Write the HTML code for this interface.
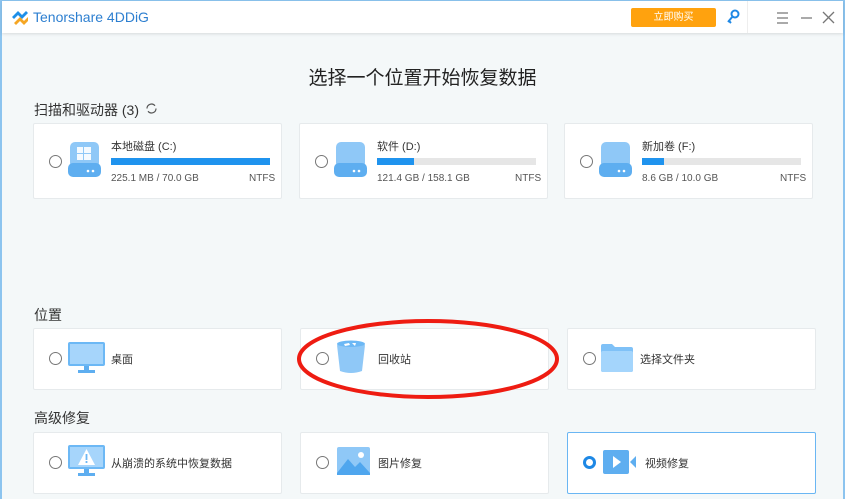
<!DOCTYPE html>
<html><head><meta charset="utf-8"><style>
*{margin:0;padding:0;box-sizing:border-box}
body{width:845px;height:499px;overflow:hidden;background:#f4f8f9;font-family:"Liberation Sans","Noto Sans CJK SC",sans-serif;position:relative;color:#333}
.win{position:absolute;left:0;top:0;width:845px;height:499px;border-left:2px solid #8cc4ef;border-top:1px solid #8cc4ef;border-right:2px solid #8cc4ef}
.bar{position:absolute;left:2px;top:1px;width:841px;height:32px;background:#fff;box-shadow:0 1px 3px rgba(0,0,0,.12)}
.a{position:absolute}
.card{position:absolute;background:#fff;border:1px solid #e6eaec;border-radius:2px}
.radio{position:absolute;width:13px;height:13px;border:1px solid #777;border-radius:50%}
.t{position:absolute;font-size:11px;color:#333;white-space:nowrap}
.s{position:absolute;font-size:10px;color:#555}
.h{position:absolute;font-size:14px;color:#333}
.prog{position:absolute;height:7px;background:#e6e6e6}
.prog i{display:block;height:7px;background:#1f93ee}
</style></head><body>
<div class="win"></div>
<div class="bar">
 <svg class="a" style="left:8px;top:8px" width="20" height="18" viewBox="0 0 20 18"><path d="M2 8 L8 2 L12 6 L16 2 L18 4 L12 10 L8 6 L4 10Z" fill="#1e8fe8"/><path d="M4 14 L10 8 L14 12 L18 8 L18 12 L14 16 L10 12 L6 16Z" fill="#f5a623"/></svg>
 <div class="a" style="left:31px;top:8px;font-size:14px;color:#2d7fd0">Tenorshare 4DDiG</div>
 <div class="a" style="left:629px;top:7px;width:85px;height:19px;background:#ffa20e;border-radius:2px;color:#fff;font-size:10px;text-align:center;line-height:19px">立即购买</div>
 <svg class="a" style="left:724px;top:8px" width="14" height="16" viewBox="0 0 14 16"><circle cx="9" cy="5" r="3.5" fill="none" stroke="#1e88e5" stroke-width="2"/><path d="M7 7 L2 13 M3 12 L5 14" stroke="#1e88e5" stroke-width="2"/></svg>
 <div class="a" style="left:745px;top:0;width:1px;height:32px;background:#eee"></div>
 <svg class="a" style="left:774px;top:10px" width="60" height="14" viewBox="0 0 60 14"><path d="M1 2h11M1 7h11M1 12h11M25 7h11M47 1l11 11M58 1l-11 11" stroke="#777" stroke-width="1.3"/></svg>
</div>
<div class="a" style="left:0;width:845px;top:63px;text-align:center;font-size:19px;color:#222">选择一个位置开始恢复数据</div>
<div class="h" style="left:34px;top:100px">扫描和驱动器 (3)</div>
<svg class="a" style="left:145px;top:102px" width="13" height="13" viewBox="0 0 13 13"><path d="M2 6.5a4.5 4.5 0 0 1 8-2.8M11 6.5a4.5 4.5 0 0 1-8 2.8" fill="none" stroke="#555" stroke-width="1.2"/></svg>

<div class="card" style="left:33px;top:123px;width:249px;height:76px"></div>
<div class="card" style="left:299px;top:123px;width:249px;height:76px"></div>
<div class="card" style="left:564px;top:123px;width:249px;height:76px"></div>

<div class="radio" style="left:49px;top:155px"></div>
<div class="radio" style="left:315px;top:155px"></div>
<div class="radio" style="left:580px;top:155px"></div>

<svg class="a" style="left:68px;top:142px" width="33" height="35" viewBox="0 0 33 35"><rect x="2" y="0" width="29" height="26" rx="5" fill="#8fc8f7"/><rect x="0" y="21" width="33" height="14" rx="5" fill="#5eaef0"/><circle cx="20" cy="29" r="1.3" fill="#fff"/><circle cx="25" cy="29" r="1.3" fill="#fff"/><path d="M9 5h6v6H9zM16 5h7v6h-7zM9 12h6v6H9zM16 12h7v6h-7z" fill="#fff" opacity=".9"/></svg>
<svg class="a" style="left:334px;top:142px" width="33" height="35" viewBox="0 0 33 35"><rect x="2" y="0" width="29" height="26" rx="5" fill="#8fc8f7"/><rect x="0" y="21" width="33" height="14" rx="5" fill="#5eaef0"/><circle cx="20" cy="29" r="1.3" fill="#fff"/><circle cx="25" cy="29" r="1.3" fill="#fff"/></svg>
<svg class="a" style="left:599px;top:142px" width="33" height="35" viewBox="0 0 33 35"><rect x="2" y="0" width="29" height="26" rx="5" fill="#8fc8f7"/><rect x="0" y="21" width="33" height="14" rx="5" fill="#5eaef0"/><circle cx="20" cy="29" r="1.3" fill="#fff"/><circle cx="25" cy="29" r="1.3" fill="#fff"/></svg>

<div class="t" style="left:111px;top:138px">本地磁盘 (C:)</div>
<div class="prog" style="left:111px;top:158px;width:159px"><i style="width:100%"></i></div>
<div class="s" style="left:111px;top:173px">225.1 MB / 70.0 GB</div>
<div class="s" style="left:249px;top:173px">NTFS</div>

<div class="t" style="left:377px;top:138px">软件 (D:)</div>
<div class="prog" style="left:377px;top:158px;width:159px"><i style="width:23%"></i></div>
<div class="s" style="left:377px;top:173px">121.4 GB / 158.1 GB</div>
<div class="s" style="left:515px;top:173px">NTFS</div>

<div class="t" style="left:642px;top:138px">新加卷 (F:)</div>
<div class="prog" style="left:642px;top:158px;width:159px"><i style="width:14%"></i></div>
<div class="s" style="left:642px;top:173px">8.6 GB / 10.0 GB</div>
<div class="s" style="left:780px;top:173px">NTFS</div>

<div class="h" style="left:34px;top:305px">位置</div>
<div class="card" style="left:33px;top:328px;width:249px;height:62px"></div>
<div class="card" style="left:300px;top:328px;width:249px;height:62px"></div>
<div class="card" style="left:567px;top:328px;width:249px;height:62px"></div>
<div class="radio" style="left:49px;top:352px"></div>
<div class="radio" style="left:316px;top:352px"></div>
<div class="radio" style="left:583px;top:352px"></div>
<svg class="a" style="left:68px;top:342px" width="37" height="32" viewBox="0 0 37 32"><rect x="0" y="0" width="37" height="24" rx="2" fill="#6cb8f5"/><rect x="2" y="2" width="33" height="20" fill="#a6d5fb"/><rect x="16" y="24" width="5" height="4" fill="#5eaef0"/><rect x="10" y="28" width="17" height="3" fill="#5eaef0"/></svg>
<div class="t" style="left:111px;top:351px">桌面</div>
<svg class="a" style="left:336px;top:340px" width="30" height="34" viewBox="0 0 30 34"><ellipse cx="15" cy="4" rx="14" ry="3.5" fill="#6cb8f5"/><path d="M1 5 L4 31 Q15 35 26 31 L29 5 Q15 9 1 5Z" fill="#8fc8f7"/><path d="M8 4l5-1 1 2-5 1zM16 3l4 0-1 3z" fill="#fff"/></svg>
<div class="t" style="left:378px;top:351px">回收站</div>
<svg class="a" style="left:601px;top:344px" width="32" height="28" viewBox="0 0 32 28"><path d="M0 2 Q0 0 2 0 H11 L14 3 H30 Q32 3 32 5 V26 Q32 28 30 28 H2 Q0 28 0 26Z" fill="#7fc1f7"/><rect x="0" y="7" width="32" height="21" rx="2" fill="#a4d5fc"/></svg>
<div class="t" style="left:640px;top:351px">选择文件夹</div>

<div class="h" style="left:34px;top:408px">高级修复</div>
<div class="card" style="left:33px;top:432px;width:249px;height:62px"></div>
<div class="card" style="left:300px;top:432px;width:249px;height:62px"></div>
<div class="card" style="left:567px;top:432px;width:249px;height:62px;border-color:#6ab6f3"></div>
<div class="radio" style="left:49px;top:456px"></div>
<div class="radio" style="left:316px;top:456px"></div>
<div class="a" style="left:583px;top:456px;width:13px;height:13px;border:3px solid #1e88e5;border-radius:50%"></div>
<svg class="a" style="left:68px;top:445px" width="37" height="32" viewBox="0 0 37 32"><rect x="0" y="0" width="37" height="24" rx="2" fill="#6cb8f5"/><rect x="2" y="2" width="33" height="20" fill="#a6d5fb"/><path d="M18.5 4 L27 20 H10Z" fill="#fff"/><rect x="17.6" y="9" width="1.8" height="6" fill="#6cb8f5"/><rect x="17.6" y="16" width="1.8" height="2" fill="#6cb8f5"/><rect x="16" y="24" width="5" height="4" fill="#5eaef0"/><rect x="10" y="28" width="17" height="3" fill="#5eaef0"/></svg>
<div class="t" style="left:111px;top:455px">从崩溃的系统中恢复数据</div>
<svg class="a" style="left:337px;top:447px" width="33" height="28" viewBox="0 0 33 28"><rect width="33" height="28" rx="2" fill="#8fc8f7"/><path d="M0 26 L11 12 L18 20 L23 15 L33 26 V28 H0Z" fill="#4fa6ee"/><circle cx="24" cy="8" r="3" fill="#fff"/></svg>
<div class="t" style="left:378px;top:455px">图片修复</div>
<svg class="a" style="left:603px;top:450px" width="34" height="24" viewBox="0 0 34 24"><rect width="26" height="24" rx="2" fill="#5eaef0"/><path d="M10 6 L18 12 L10 18Z" fill="#fff"/><path d="M27 12 L33 6 V18Z" fill="#5eaef0"/></svg>
<div class="t" style="left:645px;top:455px">视频修复</div>

<svg class="a" style="left:0;top:0" width="845" height="499"><ellipse cx="428" cy="359" rx="129" ry="38" fill="none" stroke="#ee1c12" stroke-width="4"/></svg>
</body></html>
